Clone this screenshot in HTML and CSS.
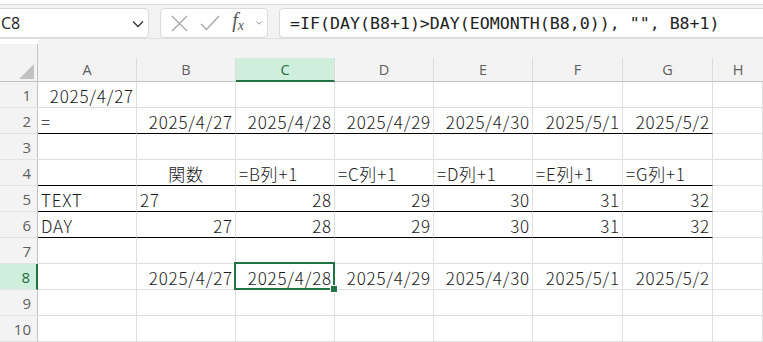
FILE: index.html
```html
<!DOCTYPE html>
<html lang="ja">

<head>
  <meta charset="utf-8">
  <title>Book1 - Excel</title>
  <link rel="stylesheet" href="styles.css">
</head>

<body>
  <div class="topline"></div>
  <div class="fbar">
    <div class="namebox">
      <span>C8</span>
      <svg class="chev" width="12" height="8" viewBox="0 0 12 8"><path d="M1 1.5 L6 6.5 L11 1.5" fill="none" stroke="#333" stroke-width="1.3"/></svg>
    </div>
    <div class="tools">
      <svg width="17" height="17" viewBox="0 0 17 17"><path d="M1 1 L16 16 M16 1 L1 16" stroke="#a6a6a6" stroke-width="1.3"/></svg>
      <svg width="20" height="16" viewBox="0 0 20 16"><path d="M1 9 L6.5 14.5 L19 1" fill="none" stroke="#a6a6a6" stroke-width="1.3"/></svg>
      <span class="fx"><i>f</i><sub>x</sub></span>
      <svg width="6" height="4" viewBox="0 0 6 4"><path d="M0.5 0.5 L3 3.2 L5.5 0.5" fill="none" stroke="#999" stroke-width="1"/></svg>
    </div>
    <div class="formula">=IF(DAY(B8+1)&gt;DAY(EOMONTH(B8,0)), "", B8+1)</div>
  </div>

  <div class="sheet">
    <!-- header row -->
    <div class="corner"><div class="tri"></div></div>
    <div class="ch"><div>A</div></div>
    <div class="ch"><div>B</div></div>
    <div class="ch on"><div>C</div></div>
    <div class="ch"><div>D</div></div>
    <div class="ch"><div>E</div></div>
    <div class="ch"><div>F</div></div>
    <div class="ch"><div>G</div></div>
    <div class="ch last"><div>H</div></div>

    <!-- 1 -->
    <div class="rh">1</div>
    <div class="c r">2025/4/27</div>
    <div class="c"></div><div class="c"></div><div class="c"></div><div class="c"></div><div class="c"></div><div class="c"></div><div class="c"></div>

    <!-- 2 -->
    <div class="rh">2</div>
    <div class="c bb">=</div>
    <div class="c r bb">2025/4/27</div>
    <div class="c r bb">2025/4/28</div>
    <div class="c r bb">2025/4/29</div>
    <div class="c r bb">2025/4/30</div>
    <div class="c r bb">2025/5/1</div>
    <div class="c r bb">2025/5/2</div>
    <div class="c"></div>

    <!-- 3 -->
    <div class="rh">3</div>
    <div class="c"></div><div class="c"></div><div class="c"></div><div class="c"></div><div class="c"></div><div class="c"></div><div class="c"></div><div class="c"></div>

    <!-- 4 -->
    <div class="rh">4</div>
    <div class="c bb"></div>
    <div class="c m bb">関数</div>
    <div class="c bb">=B列+1</div>
    <div class="c bb">=C列+1</div>
    <div class="c bb">=D列+1</div>
    <div class="c bb">=E列+1</div>
    <div class="c bb">=G列+1</div>
    <div class="c"></div>

    <!-- 5 -->
    <div class="rh">5</div>
    <div class="c bb">TEXT</div>
    <div class="c bb">27</div>
    <div class="c r bb">28</div>
    <div class="c r bb">29</div>
    <div class="c r bb">30</div>
    <div class="c r bb">31</div>
    <div class="c r bb">32</div>
    <div class="c"></div>

    <!-- 6 -->
    <div class="rh">6</div>
    <div class="c bb">DAY</div>
    <div class="c r bb">27</div>
    <div class="c r bb">28</div>
    <div class="c r bb">29</div>
    <div class="c r bb">30</div>
    <div class="c r bb">31</div>
    <div class="c r bb">32</div>
    <div class="c"></div>

    <!-- 7 -->
    <div class="rh">7</div>
    <div class="c"></div><div class="c"></div><div class="c"></div><div class="c"></div><div class="c"></div><div class="c"></div><div class="c"></div><div class="c"></div>

    <!-- 8 -->
    <div class="rh on">8</div>
    <div class="c"></div>
    <div class="c r">2025/4/27</div>
    <div class="c r sel">2025/4/28</div>
    <div class="c r">2025/4/29</div>
    <div class="c r">2025/4/30</div>
    <div class="c r">2025/5/1</div>
    <div class="c r">2025/5/2</div>
    <div class="c"></div>

    <!-- 9 -->
    <div class="rh">9</div>
    <div class="c"></div><div class="c"></div><div class="c"></div><div class="c"></div><div class="c"></div><div class="c"></div><div class="c"></div><div class="c"></div>

    <!-- 10 -->
    <div class="rh">10</div>
    <div class="c"></div><div class="c"></div><div class="c"></div><div class="c"></div><div class="c"></div><div class="c"></div><div class="c"></div><div class="c"></div>
  </div>
</body>

</html>
```

FILE: styles.css
```css
* {
  box-sizing: border-box;
}

body {
  margin: 0;
  background-color: #fff;
  overflow: hidden;
  font-family: 'Noto Sans CJK JP', 'Noto Sans', sans-serif;
}

.topline {
  height: 5px;
  background-color: #fff;
  border-bottom: 1px solid #dcdcdc;
}

.fbar {
  display: flex;
  align-items: flex-end;
  height: 34px;
  background-color: #f3f3f3;
  border-bottom: 1px solid #e0e0e0;
}

.namebox,
.tools,
.formula {
  height: 30px;
  background-color: #fff;
  border: 1px solid #dadada;
  border-radius: 4px;
  display: flex;
  align-items: center;
}

.namebox {
  width: 155px;
  margin-left: -6px;
  padding: 0 4px 0 6px;
  justify-content: space-between;
  font-family: 'Open Sans', 'Noto Sans', sans-serif;
  font-size: 16px;
  color: #222;
}

.chev {
  margin-top: 2px;
}

.tools {
  width: 108px;
  margin-left: 11px;
  padding: 0 5px 0 10px;
  justify-content: space-between;
}

.fx {
  font-family: 'Liberation Serif', serif;
  font-size: 20px;
  color: #555;
  line-height: 1;
  margin-top: -3px;
}

.fx sub {
  font-style: italic;
  font-size: 14px;
  vertical-align: -3px;
}

.formula {
  flex: 1;
  margin-left: 11px;
  margin-right: -10px;
  padding-left: 10px;
  font-family: 'DejaVu Sans Mono', monospace;
  font-size: 16.6px;
  color: #222;
  white-space: pre;
}

.sheet {
  display: grid;
  grid-template-columns: 38px 99px 99px 99px 99px 99px 90px 90px 1fr;
  grid-template-rows: 43px repeat(10, 26px);
  background-color: #fff;
}

.corner {
  margin-top: 5px;
  background-color: #f3f3f3;
  border-right: 1px solid #c4c4c4;
  border-bottom: 1px solid #c4c4c4;
  display: flex;
  align-items: flex-end;
  justify-content: flex-end;
  padding: 0 3px 2px 0;
}

.tri {
  width: 0;
  height: 0;
  border-left: 15px solid transparent;
  border-bottom: 15px solid #c2c2c2;
}

.ch {
  background-color: #f3f3f3;
  padding-top: 19px;
}

.ch div {
  height: 24px;
  border-right: 1px solid #dcdcdc;
  border-bottom: 1px solid #c4c4c4;
  display: flex;
  align-items: center;
  justify-content: center;
  font-family: 'Open Sans', 'Noto Sans', sans-serif;
  font-size: 14.5px;
  color: #5f5f5f;
}

.ch.last div {
  border-right: none;
}

.ch.on div {
  background-color: #d0eedc;
  color: #1e6e42;
  border-bottom: 2px solid #217346;
}

.rh {
  background-color: #f3f3f3;
  border-right: 1px solid #c4c4c4;
  border-bottom: 1px solid #e3e3e3;
  display: flex;
  align-items: center;
  justify-content: flex-end;
  padding-right: 6px;
  font-family: 'Open Sans', 'Noto Sans', sans-serif;
  font-size: 15px;
  color: #5f5f5f;
}

.rh.on {
  background-color: #d0eedc;
  color: #1e6e42;
  border-right: 2px solid #217346;
}

.c {
  border-right: 1px solid #dedede;
  border-bottom: 1px solid #dedede;
  display: flex;
  align-items: center;
  padding: 2px 3px 0 3px;
  font-size: 17px;
  font-weight: 300;
  letter-spacing: 0.8px;
  line-height: 1;
  color: #1a1a1a;
  white-space: nowrap;
}

.r {
  justify-content: flex-end;
  padding-right: 2px;
}

.m {
  justify-content: center;
}

.bb {
  border-bottom-color: #000;
}

.sel {
  position: relative;
}

.sel::after {
  content: "";
  position: absolute;
  left: -2px;
  top: -2px;
  right: -1px;
  bottom: -1px;
  border: 2px solid #217346;
}

.sel::before {
  content: "";
  position: absolute;
  right: -4px;
  bottom: -4px;
  width: 6px;
  height: 6px;
  background-color: #217346;
  border: 1px solid #fff;
  z-index: 1;
}
```
